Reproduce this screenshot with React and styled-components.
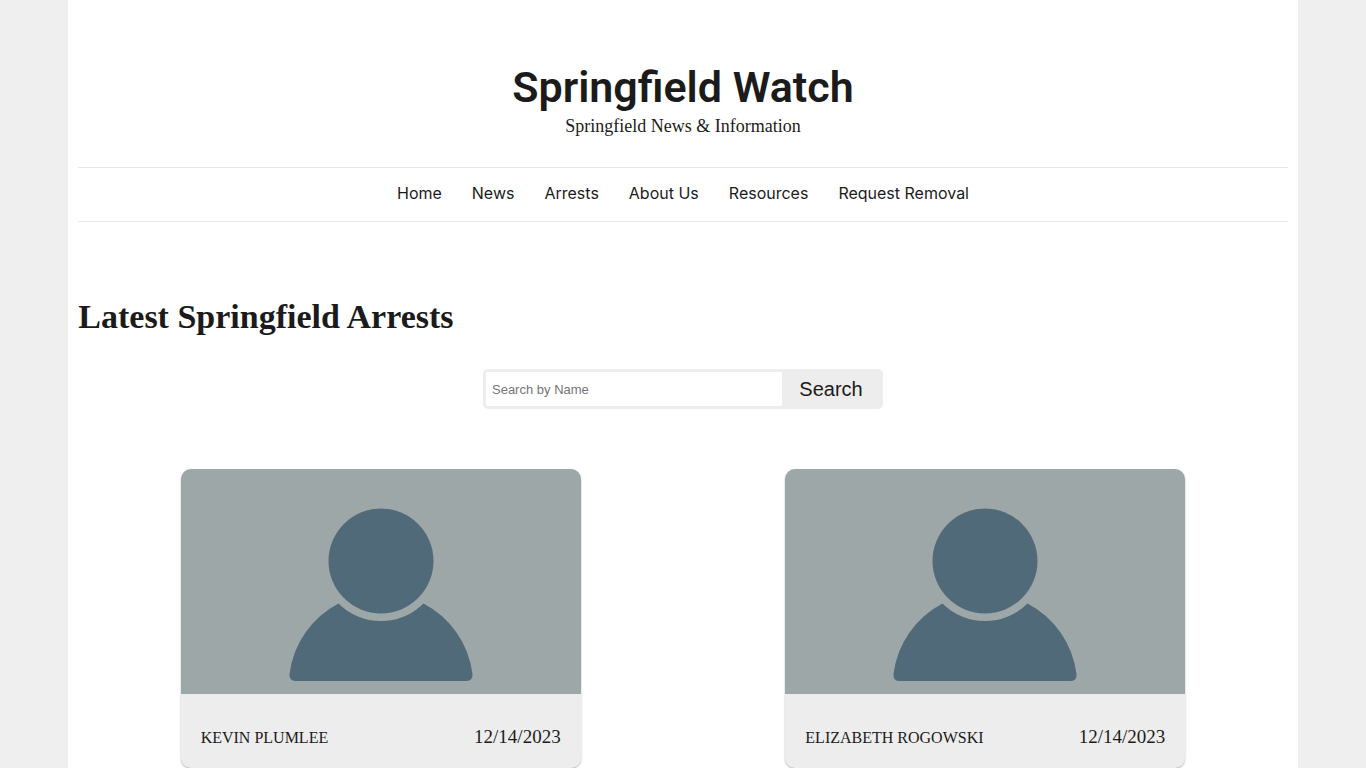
import React from 'react'
import styled, { createGlobalStyle } from 'styled-components'

const links = ['Home', 'News', 'Arrests', 'About Us', 'Resources', 'Request Removal']

const arrests = [
  { name: 'KEVIN PLUMLEE', date: '12/14/2023' },
  { name: 'ELIZABETH ROGOWSKI', date: '12/14/2023' },
]

const Avatar = () => (
  <AvatarImage viewBox="0 0 400 225" role="img" aria-label="No photo">
    <rect width="400" height="225" fill="#9ea7a7" />
    <circle cx="200" cy="92" r="52.5" fill="#516a79" />
    <path
      d="M157.5 134.4A60 60 0 0 0 242.5 134.4A92.5 92.5 0 0 1 291.5 205Q292 212 285.5 212H114.5Q108 212 108.5 205A92.5 92.5 0 0 1 157.5 134.4Z"
      fill="#516a79"
    />
  </AvatarImage>
)

const App = () => {
  return (
    <>
      <GlobalStyle />
      <Page>
        <Header>
          <SiteTitle>Springfield Watch</SiteTitle>
          <Tagline>Springfield News &amp; Information</Tagline>
        </Header>
        <Nav>
          {links.map((link) => (
            <NavLink href="#" key={link}>{link}</NavLink>
          ))}
        </Nav>
        <main>
          <Heading>Latest Springfield Arrests</Heading>
          <SearchForm onSubmit={(e) => e.preventDefault()}>
            <SearchInput type="text" placeholder="Search by Name" aria-label="Search by Name" />
            <SearchButton type="submit">Search</SearchButton>
          </SearchForm>
          <Cards>
            {arrests.map((arrest) => (
              <Card key={arrest.name}>
                <Avatar />
                <CardInfo>
                  <CardName>{arrest.name}</CardName>
                  <CardDate>{arrest.date}</CardDate>
                </CardInfo>
              </Card>
            ))}
          </Cards>
        </main>
      </Page>
    </>
  )
}

export default App

const GlobalStyle = createGlobalStyle`
* {
  box-sizing: border-box;
}
body {
  margin: 0;
  background: #efefef;
  color: #1b1b1b;
  font-family: 'Liberation Serif', serif;
  font-size: 16px;
  line-height: 24px;
}
`

const Page = styled.div`
width: 90%;
min-height: 100vh;
margin: 0 auto;
padding: 0 10px;
background: #fff;
`

const Header = styled.header`
padding: 60px 0 29px;
text-align: center;
`

const SiteTitle = styled.h1`
margin: 0;
font-family: Roboto, sans-serif;
font-size: 43px;
font-weight: 600;
line-height: 54px;
`

const Tagline = styled.p`
margin: 0;
font-size: 18px;
`

const Nav = styled.nav`
display: flex;
flex-wrap: wrap;
justify-content: center;
gap: 0 30px;
padding: 13px 0 16px;
border-top: 1px solid #e9e9e9;
border-bottom: 1px solid #e9e9e9;
`

const NavLink = styled.a`
color: #1b1b1b;
font-family: Inter, sans-serif;
font-size: 16px;
text-decoration: none;

&:hover {
  text-decoration: underline;
}
`

const Heading = styled.h2`
margin: 73px 0 30px;
font-size: 34px;
font-weight: 700;
line-height: 44px;
`

const SearchForm = styled.form`
display: flex;
width: 400px;
max-width: 100%;
height: 40px;
margin: 0 auto;
border: 3px solid #ededed;
border-radius: 5px;
overflow: hidden;
`

const SearchInput = styled.input`
flex: 1;
min-width: 0;
padding: 0 6px;
border: 0;
font-family: 'Liberation Sans', sans-serif;
font-size: 13px;
outline: none;

&::placeholder {
  color: #757575;
}
`

const SearchButton = styled.button`
width: 98px;
padding: 0;
border: 0;
background: #ededed;
color: #1b1b1b;
font-family: 'Liberation Sans', sans-serif;
font-size: 20px;
cursor: pointer;
`

const Cards = styled.div`
display: grid;
grid-template-columns: repeat(auto-fit, minmax(400px, 1fr));
justify-items: center;
margin-top: 60px;
`

const Card = styled.article`
width: 400px;
border-radius: 10px;
background: #ededed;
box-shadow: 0 1px 2px rgba(0, 0, 0, 0.3);
overflow: hidden;
`

const AvatarImage = styled.svg`
display: block;
width: 100%;
`

const CardInfo = styled.div`
display: flex;
align-items: baseline;
justify-content: space-between;
padding: 31px 20px 18px;
`

const CardName = styled.span`
font-size: 16px;
`

const CardDate = styled.time`
font-size: 19px;
`
